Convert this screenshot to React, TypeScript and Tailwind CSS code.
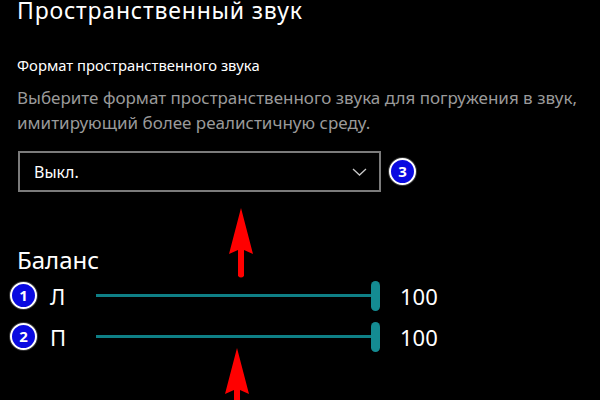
import React from "react";

function Badge({ n }: { n: number }) {
  return (
    <div className="flex h-[27px] w-[27px] shrink-0 items-center justify-center rounded-full border-[2.5px] border-white bg-[#0a0ae0] text-[15px] font-bold leading-none text-white shadow-[0_0_0_1px_#333]">
      {n}
    </div>
  );
}

function RedArrow({ className }: { className: string }) {
  return (
    <svg className={className} width="26" height="72" viewBox="0 0 26 72">
      <path d="M13 1 L25 47 L16 43 L16 69 Q13 72 10 69 L10 43 L1 47 Z" fill="#ff0000" />
    </svg>
  );
}

function BalanceRow({ badge, label }: { badge: number; label: string }) {
  return (
    <div className="flex h-[41px] items-center">
      <div className="ml-[10px]">
        <Badge n={badge} />
      </div>
      <span className="ml-[13px] w-[46px] text-[22px] leading-none text-white">{label}</span>
      <div className="relative flex h-[30px] w-[284px] items-center">
        <div className="h-[3px] w-[276px] bg-[#0e7f86]" />
        <div className="absolute right-0 h-[30px] w-[9px] rounded-full bg-[#148b92]" />
      </div>
      <span className="ml-[20px] text-[22px] leading-none text-white">100</span>
    </div>
  );
}

export default function App() {
  return (
    <div className="relative h-[400px] w-[600px] overflow-hidden bg-black font-['Noto_Sans',sans-serif]">
      <div className="pl-[17px]">
        <h1 className="text-[23px] leading-[20px] tracking-[0.8px] text-white">Пространственный звук</h1>
        <p className="mt-[35px] text-[14.8px] leading-[20px] text-white">Формат пространственного звука</p>
        <p className="mt-[10px] text-[17px] leading-[25px] text-[#9a9a9a]">
          Выберите формат пространственного звука для погружения в звук,
          <br />
          имитирующий более реалистичную среду.
        </p>
        <div className="mt-[16px] flex items-center">
          <div className="ml-[1px] flex h-[41px] w-[363px] items-center justify-between border-2 border-[#7b7b7b] pl-[14px] pr-[12px]">
            <span className="text-[16px] text-white">Выкл.</span>
            <svg width="15" height="8" viewBox="0 0 15 8">
              <path d="M1 1 L7.5 7 L14 1" fill="none" stroke="#c8c8c8" strokeWidth="1.3" />
            </svg>
          </div>
          <div className="ml-[8px]">
            <Badge n={3} />
          </div>
        </div>
        <h2 className="mt-[54px] text-[24px] leading-[28px] text-white">Баланс</h2>
      </div>
      <div className="mt-[1px]">
        <BalanceRow badge={1} label="Л" />
        <BalanceRow badge={2} label="П" />
      </div>
      <RedArrow className="absolute left-[228px] top-[207px]" />
      <RedArrow className="absolute left-[224px] top-[347px]" />
    </div>
  );
}
